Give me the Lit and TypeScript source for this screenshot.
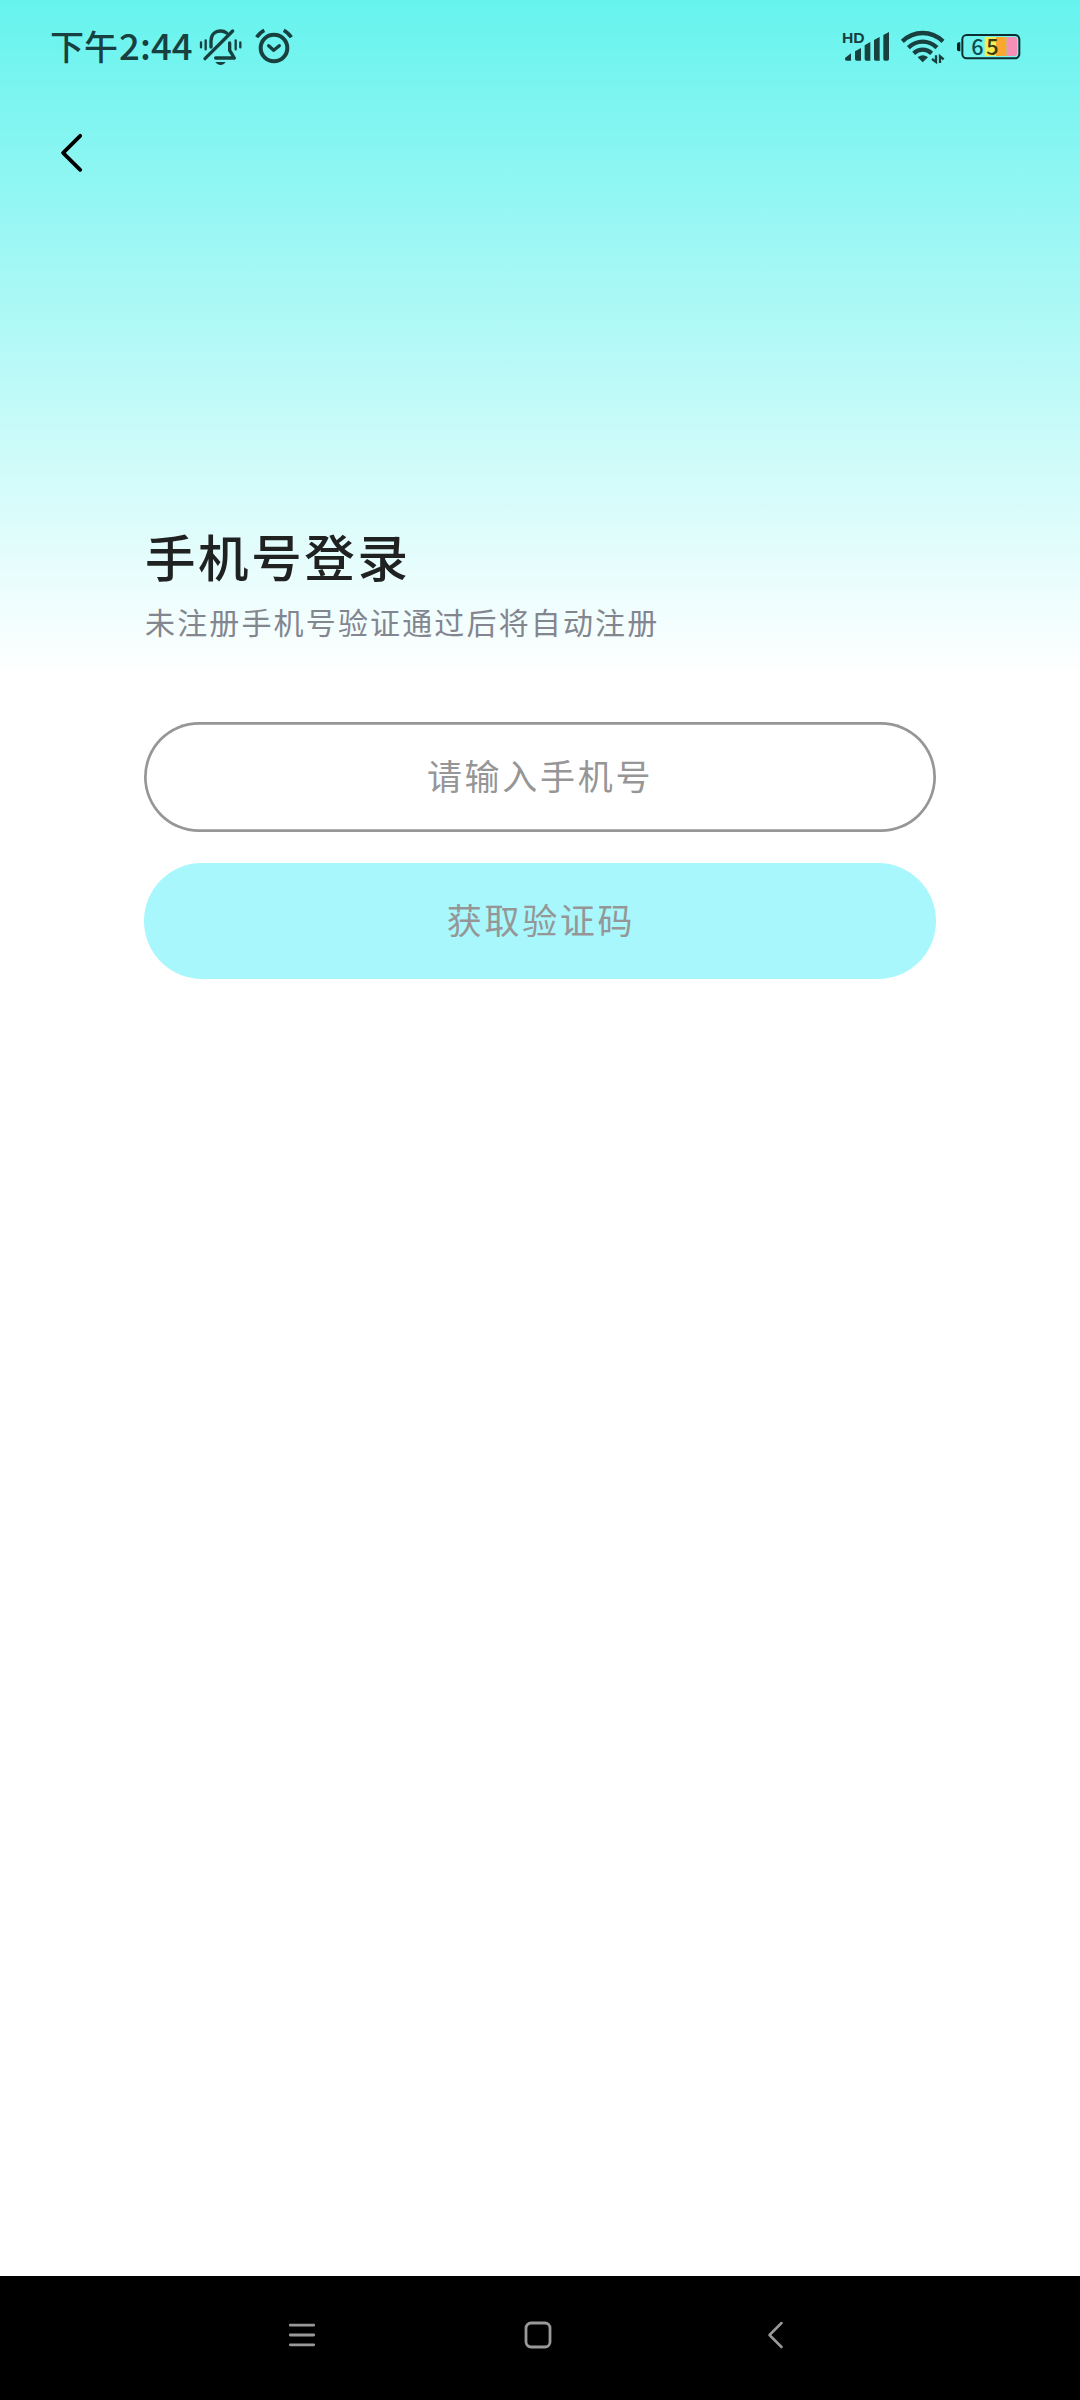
import { LitElement, html, css } from "lit";
import { customElement, property } from "lit/decorators.js";

@customElement("status-bar")
class StatusBar extends LitElement {
  @property() period = "下午";
  @property() time = "2:44";
  @property() battery = "65";

  static styles = css`
    :host {
      display: flex;
      align-items: center;
      height: 98px;
      padding: 0 59px 0 50px;
      box-sizing: border-box;
      color: #17403f;
    }
    .clock {
      display: flex;
      align-items: baseline;
      width: 148px;
      font-size: 34px;
      line-height: 42px;
      font-weight: 500;
      white-space: nowrap;
      padding-bottom: 8px;
    }
    .digits {
      font-size: 36.5px;
      letter-spacing: 0.1px;
      margin-left: 1px;
    }
    svg {
      display: block;
      flex: none;
      height: 42px;
    }
    .mute { width: 45px; }
    .alarm { width: 39px; margin-left: 11px; }
    .spacer { flex: 1; }
    .signal { width: 49px; }
    .wifi { width: 45px; margin-left: 9px; }
    .battery { width: 65px; margin-left: 11px; }
    .hd { font: 700 45px "Liberation Sans", sans-serif; }
    .level { font: 500 65px "Noto Sans CJK SC", sans-serif; }
  `;

  render() {
    return html`
      <div class="clock"><span>${this.period}</span><span class="digits">${this.time}</span></div>
      <svg class="mute" viewBox="24 39 135 126" fill="none" stroke="currentColor" stroke-width="10" stroke-linecap="round">
        <path d="M63 96V78C63 58 76 48 92 48C99 48 105 50 110 54" />
        <path d="M119 84V106L133 129H77" stroke-linejoin="round" />
        <path d="M128 48L45 131" stroke-width="10" />
        <path d="M76 141H107C103 147 98 150 92 150S80 147 76 141Z" fill="currentColor" stroke="none" />
        <path d="M33 82V97M47 76V103M137 76V103M151 82V97" stroke-width="7" />
      </svg>
      <svg class="alarm" viewBox="192 39 117 126" fill="none" stroke="currentColor" stroke-width="12">
        <circle cx="252" cy="99" r="40" />
        <path d="M200 67C206 58 214 50 223 46M281 46C290 50 298 58 304 67" stroke-width="11" />
        <path d="M236 92L251 106L268 92" stroke-width="10" stroke-linecap="round" stroke-linejoin="round" />
      </svg>
      <span class="spacer"></span>
      <svg class="signal" viewBox="36 39 147 126" fill="currentColor">
        <text class="hd" x="36" y="83" textLength="68" lengthAdjust="spacingAndGlyphs">HD</text>
        <path d="M45 129L63 115V137H50Q45 137 45 132Z" />
        <path d="M75 109L93 99V137H80Q75 137 75 132Z" />
        <path d="M104 91L121 81V137H109Q104 137 104 132Z" />
        <path d="M132 75L149 66V137H137Q132 137 132 132Z" />
        <path d="M160 60L177 51V132Q177 137 172 137H165Q160 137 160 132Z" />
      </svg>
      <svg class="wifi" viewBox="210 39 135 126" fill="none" stroke="currentColor" stroke-width="13">
        <path d="M217 79C234 63 255 54 278 54S322 63 339 79" />
        <path d="M235 98C247 87 261 80 278 80S309 87 321 98" />
        <path d="M251 115C259 108 267 104 278 104S297 108 305 115" />
        <path d="M278 121C285 121 290 124 294 127L278 142L263 127C267 124 272 121 278 121Z" fill="currentColor" stroke="none" />
        <path d="M318 121V141L306 132M330 144V124L341 133" stroke-width="7" />
      </svg>
      <svg class="battery" viewBox="48 39 195 126">
        <path d="M61 82V109H57Q51 109 51 103V88Q51 82 57 82Z" fill="#071f20" />
        <rect x="134" y="66" width="34" height="57" fill="#f1ee55" />
        <rect x="168" y="66" width="32" height="57" fill="#fba62c" />
        <path d="M200 66H224Q231 66 231 73V116Q231 123 224 123H200Z" fill="#f58fb7" />
        <rect x="67" y="60" width="171" height="70" rx="13" fill="none" stroke="#0b2f30" stroke-width="6" />
        <text class="level" x="94" y="120" fill="#0d4d50" textLength="82">${this.battery[0]}<tspan fill="#3b3a10">${this.battery[1]}</tspan></text>
      </svg>
    `;
  }
}

@customElement("system-nav")
class SystemNav extends LitElement {
  static styles = css`
    :host {
      display: flex;
      justify-content: center;
      align-items: center;
      gap: 206.5px;
      height: 124px;
      padding: 0 4px 6px 0;
      box-sizing: border-box;
      background: #000;
      color: #999;
    }
    svg { display: block; width: 30px; height: 30px; }
  `;

  render() {
    return html`
      <svg viewBox="0 0 30 30" fill="none" stroke="currentColor" stroke-width="2.8" stroke-linecap="round">
        <path d="M3.3 5.2H26.7M3.3 15H26.7M3.3 24.8H26.7" />
      </svg>
      <svg viewBox="0 0 30 30" fill="none" stroke="currentColor" stroke-width="2.8">
        <rect x="3" y="3" width="24" height="24" rx="5" />
      </svg>
      <svg viewBox="0 0 30 30" fill="none" stroke="currentColor" stroke-width="2.5" stroke-linecap="round" stroke-linejoin="round">
        <path d="M21.5 3L9.5 15L21.5 27" />
      </svg>
    `;
  }
}

@customElement("app-root")
class AppRoot extends LitElement {
  static styles = css`
    :host {
      display: flex;
      flex-direction: column;
      width: 1080px;
      height: 2400px;
      font-family: "Noto Sans CJK SC", sans-serif;
      background: #fff linear-gradient(#66f3ee, #fff) 0 0 / 100% 675px no-repeat;
    }
    .header {
      display: flex;
      align-items: center;
      height: 110px;
      padding-left: 55px;
    }
    .back {
      display: block;
      padding: 0;
      border: 0;
      background: none;
    }
    .back svg { display: block; width: 32px; height: 42px; }
    .form {
      flex: 1;
      display: flex;
      flex-direction: column;
      padding: 311px 144px 0;
    }
    .title {
      margin: 0;
      padding-left: 1px;
      font-size: 50.5px;
      line-height: 72px;
      font-weight: 500;
      letter-spacing: 2.6px;
      color: #202222;
    }
    .hint {
      margin: 8px 0 0;
      padding-left: 1px;
      font-size: 30px;
      line-height: 44px;
      letter-spacing: 2.15px;
      color: #83868f;
    }
    .phone, .submit {
      display: block;
      width: 100%;
      box-sizing: border-box;
      border: 0;
      font: 400 35px "Noto Sans CJK SC", sans-serif;
      letter-spacing: 2.7px;
      text-align: center;
      color: #969696;
    }
    .phone {
      height: 110px;
      margin-top: 79px;
      padding: 0 0 6px;
      border-radius: 55px;
      background: #fff;
      box-shadow: inset 0 0 0 2.7px #969696;
    }
    .phone::placeholder { color: #969696; opacity: 1; }
    .submit {
      height: 116px;
      margin-top: 31px;
      padding: 0 0 6px 2px;
      border-radius: 58px;
      background: #a7f7fc;
    }
  `;

  render() {
    return html`
      <status-bar></status-bar>
      <div class="header">
        <button class="back" aria-label="返回">
          <svg viewBox="0 0 32 42" fill="none" stroke="#000" stroke-width="3.8" stroke-linecap="round" stroke-linejoin="round">
            <path d="M25.2 3.8L8.1 20.8L25.2 37.8" />
          </svg>
        </button>
      </div>
      <main class="form">
        <h1 class="title">手机号登录</h1>
        <p class="hint">未注册手机号验证通过后将自动注册</p>
        <input class="phone" type="tel" placeholder="请输入手机号" />
        <button class="submit">获取验证码</button>
      </main>
      <system-nav></system-nav>
    `;
  }
}
